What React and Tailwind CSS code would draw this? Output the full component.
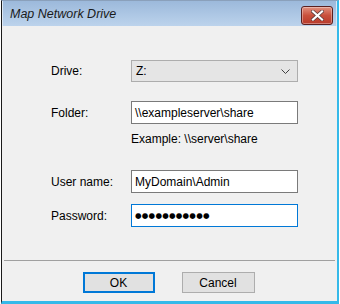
export default function App() {
  const font = { fontFamily: '"Liberation Sans", Arial, sans-serif' };
  return (
    <div className="w-[340px] h-[304px] bg-white text-[12px] text-black" style={font}>
      <div className="ml-[1px] w-[338px] h-[304px] flex flex-col border-l border-l-[#1a1a1a] border-t border-t-[#8aa0bb] border-b-[3px] border-b-[#35b9e9] border-r-2 border-r-[#35b9e9] bg-[#f0f0f0]">
        {/* Title bar */}
        <div className="h-[25px] shrink-0 flex items-center justify-between pl-[7px] pr-[3px] bg-gradient-to-b from-[#9cb9db] to-[#bcd3ec] border-x border-x-[#dde8f4]">
          <span className="italic text-[12.5px] text-[#1a1a1a] pt-[2px]">Map Network Drive</span>
          <div className="w-[32px] h-[19px] mt-[3px] rounded-[3px] border border-[#5a1f1f] bg-gradient-to-b from-[#e0907f] via-[#c9503c] to-[#b8392a] flex items-center justify-center shadow-[inset_0_0_0_1px_rgba(255,255,255,0.35)]">
            <svg width="13" height="11" viewBox="0 0 13 11">
              <path
                d="M2 1.5 L11 9.5 M11 1.5 L2 9.5"
                stroke="#5a3a3a"
                strokeWidth="3.6"
                strokeLinecap="square"
              />
              <path
                d="M2 1.5 L11 9.5 M11 1.5 L2 9.5"
                stroke="#ffffff"
                strokeWidth="2.2"
                strokeLinecap="square"
              />
            </svg>
          </div>
        </div>

        {/* Body */}
        <div className="flex-1 flex flex-col mx-[1px]">
          <div className="h-[234px] pt-[34px] pl-[48px]">
            <div className="flex items-center h-[22px]">
              <span className="w-[80px]">Drive:</span>
              <div className="w-[167px] h-[22px] border border-[#adadad] bg-[#e5e5e5] flex items-center justify-between pl-[4px] pr-[7px]">
                <span>Z:</span>
                <svg width="9" height="5" viewBox="0 0 9 5">
                  <path d="M0.5 0.5 L4.5 4.5 L8.5 0.5" fill="none" stroke="#404040" strokeWidth="1" />
                </svg>
              </div>
            </div>

            <div className="flex items-center h-[23px] mt-[19px]">
              <span className="w-[80px]">Folder:</span>
              <div className="w-[167px] h-[23px] border border-[#7a7a7a] bg-white flex items-center pl-[3px]">
                \\exampleserver\share
              </div>
            </div>

            <div className="ml-[80px] mt-[8px] h-[15px] leading-[15px]">Example: \\server\share</div>

            <div className="flex items-center h-[23px] mt-[23px]">
              <span className="w-[80px]">User name:</span>
              <div className="w-[167px] h-[23px] border border-[#7a7a7a] bg-white flex items-center pl-[3px]">
                MyDomain\Admin
              </div>
            </div>

            <div className="flex items-center h-[23px] mt-[11px]">
              <span className="w-[80px]">Password:</span>
              <div className="w-[167px] h-[23px] border border-[#0078d7] bg-white flex items-center pl-[3px]">
                <span className="text-[7.5px] tracking-[0.25px]" style={{ fontFamily: '"DejaVu Sans", sans-serif' }}>
                  ●●●●●●●●●●●
                </span>
              </div>
            </div>
          </div>

          <div className="h-px bg-[#a0a0a0] mx-[1px]" />

          <div className="flex justify-center gap-[27px] pt-[11px] pr-[2px]">
            <button className="w-[72px] h-[21px] border-2 border-[#0078d7] bg-[#e1e1e1] text-[12px]" style={font}>
              OK
            </button>
            <button className="w-[73px] h-[21px] border border-[#adadad] bg-[#e1e1e1] text-[12px]" style={font}>
              Cancel
            </button>
          </div>
        </div>
      </div>
    </div>
  );
}
